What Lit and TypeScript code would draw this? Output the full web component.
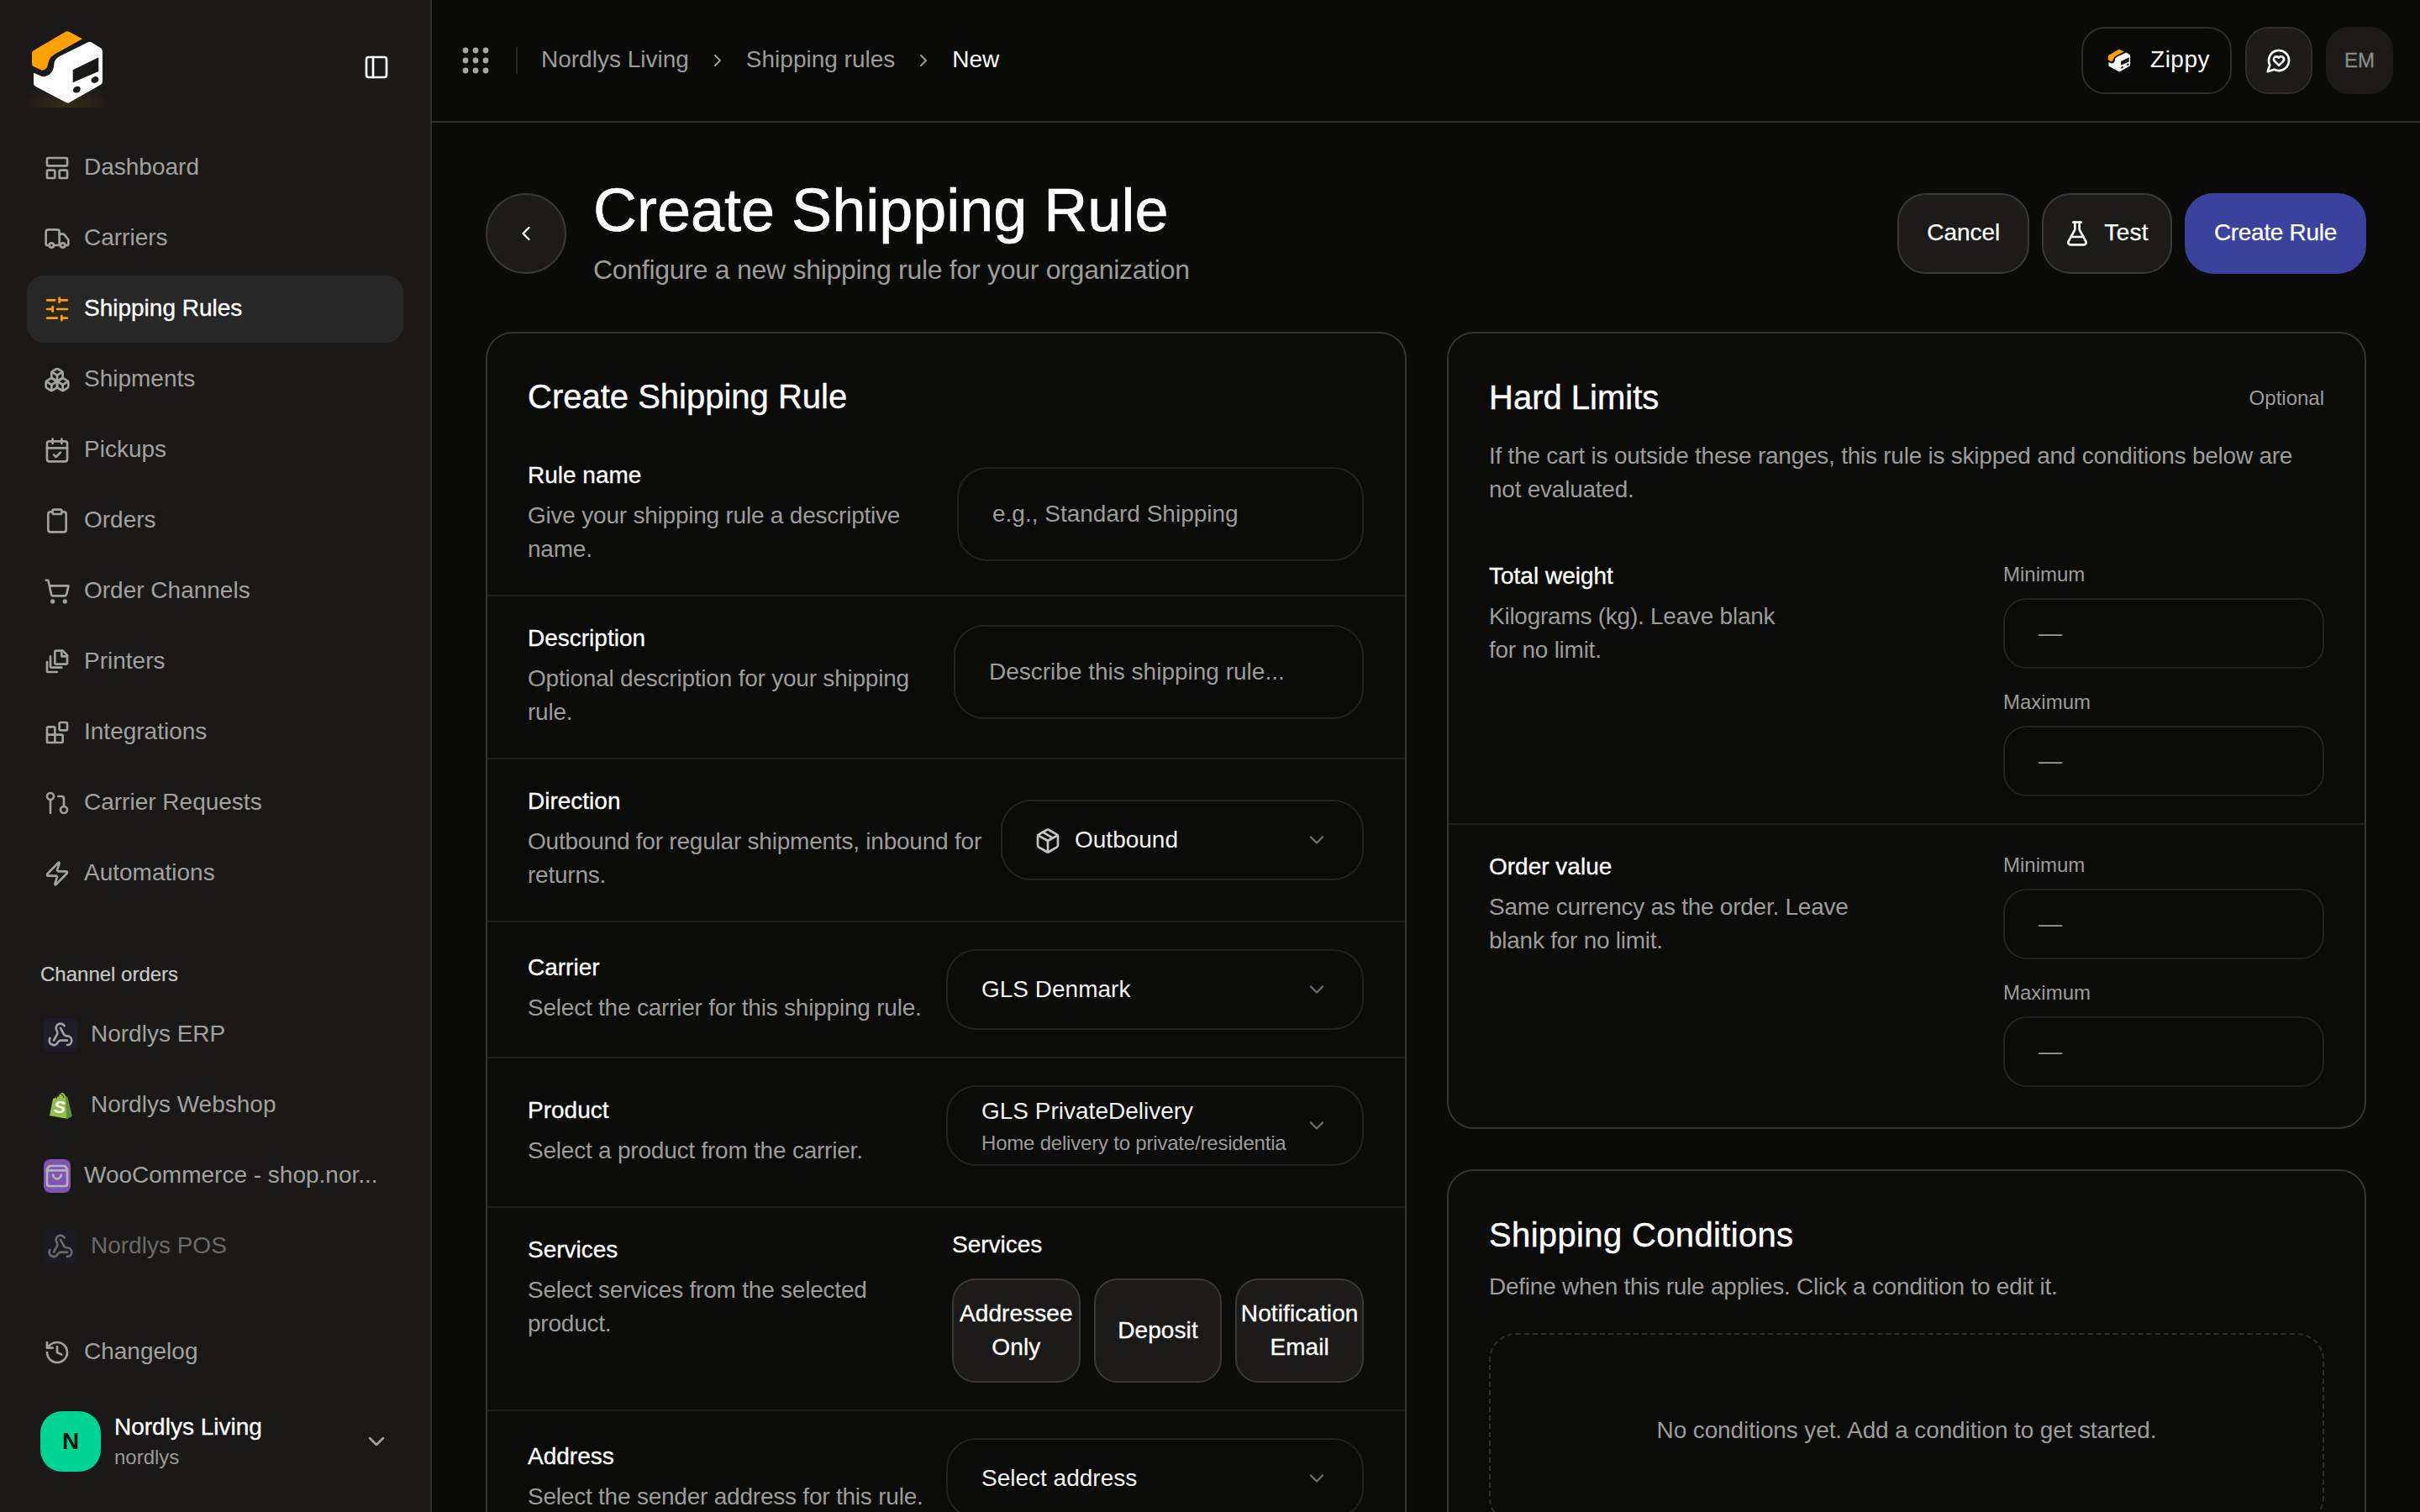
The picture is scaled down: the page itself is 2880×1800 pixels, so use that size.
import { LitElement, html, css, svg } from "lit";
import { customElement } from "lit/decorators.js";

const ic = (body: unknown, cls = "ic") => html`<svg class=${cls} viewBox="0 0 24 24" fill="none" stroke="currentColor" stroke-width="2" stroke-linecap="round" stroke-linejoin="round">${body}</svg>`;

const I: Record<string, unknown> = {
  dash: svg`<rect x="3" y="3" width="18" height="7" rx="1"/><rect x="3" y="14" width="7" height="7" rx="1"/><rect x="14" y="14" width="7" height="7" rx="1"/>`,
  truck: svg`<path d="M14 18V6a2 2 0 0 0-2-2H4a2 2 0 0 0-2 2v11a1 1 0 0 0 1 1h2"/><path d="M15 18H9"/><path d="M19 18h2a1 1 0 0 0 1-1v-3.65a1 1 0 0 0-.22-.624l-3.48-4.35A1 1 0 0 0 17.52 8H14"/><circle cx="17" cy="18" r="2"/><circle cx="7" cy="18" r="2"/>`,
  sliders: svg`<path d="M21 4h-7M10 4H3M21 12h-9M8 12H3M21 20h-5M12 20H3M14 2v4M8 10v4M16 18v4"/>`,
  boxes: svg`<path d="M2.97 12.92A2 2 0 0 0 2 14.63v3.24a2 2 0 0 0 .97 1.71l3 1.8a2 2 0 0 0 2.06 0L12 19v-5.5l-5-3-4.03 2.42Z"/><path d="m7 16.5-4.74-2.85"/><path d="m7 16.5 5-3"/><path d="M7 16.5v5.17"/><path d="M12 13.5V19l3.97 2.38a2 2 0 0 0 2.06 0l3-1.8a2 2 0 0 0 .97-1.71v-3.24a2 2 0 0 0-.97-1.71L17 10.5l-5 3Z"/><path d="m17 16.5-5-3"/><path d="m17 16.5 4.74-2.85"/><path d="M17 16.5v5.17"/><path d="M7.97 4.42A2 2 0 0 0 7 6.13v4.37l5 3 5-3V6.13a2 2 0 0 0-.97-1.71l-3-1.8a2 2 0 0 0-2.06 0l-3 1.8Z"/><path d="M12 8 7.26 5.15"/><path d="m12 8 4.74-2.85"/><path d="M12 13.5V8"/>`,
  cal: svg`<path d="M8 2v4"/><path d="M16 2v4"/><rect x="3" y="4" width="18" height="18" rx="2"/><path d="M3 10h18"/><path d="m9 16 2 2 4-4"/>`,
  clip: svg`<rect x="8" y="2" width="8" height="4" rx="1"/><path d="M16 4h2a2 2 0 0 1 2 2v14a2 2 0 0 1-2 2H6a2 2 0 0 1-2-2V6a2 2 0 0 1 2-2h2"/>`,
  cart: svg`<circle cx="8" cy="21" r="1"/><circle cx="19" cy="21" r="1"/><path d="M2.05 2.05h2l2.66 12.42a2 2 0 0 0 2 1.58h9.78a2 2 0 0 0 1.95-1.57l1.65-7.43H5.12"/>`,
  files: svg`<path d="M11 2h6l4 4v7a1 1 0 0 1-1 1h-9a1 1 0 0 1-1-1V3a1 1 0 0 1 1-1z"/><path d="M16 2v5h5"/><path d="M6 7v9a1 1 0 0 0 1 1h9"/><path d="M3 12v8a1 1 0 0 0 1 1h8"/>`,
  blocks: svg`<rect x="14" y="3" width="7" height="7" rx="1"/><path d="M10 21V8a1 1 0 0 0-1-1H4a1 1 0 0 0-1 1v12a1 1 0 0 0 1 1h12a1 1 0 0 0 1-1v-5a1 1 0 0 0-1-1H3"/>`,
  pr: svg`<circle cx="18" cy="18" r="3"/><circle cx="6" cy="6" r="3"/><path d="M13 6h3a2 2 0 0 1 2 2v7"/><path d="M6 9v12"/>`,
  zap: svg`<path d="M4 14a1 1 0 0 1-.78-1.63l9.9-10.2a.5.5 0 0 1 .86.46l-1.92 6.02A1 1 0 0 0 13 10h7a1 1 0 0 1 .78 1.63l-9.9 10.2a.5.5 0 0 1-.86-.46l1.92-6.02A1 1 0 0 0 11 14z"/>`,
  history: svg`<path d="M3 12a9 9 0 1 0 9-9 9.75 9.75 0 0 0-6.74 2.74L3 8"/><path d="M3 3v5h5"/><path d="M12 7v5l4 2"/>`,
  webhook: svg`<path d="M18 16.98h-5.99c-1.1 0-1.95.94-2.48 1.9A4 4 0 0 1 2 17c.01-.7.2-1.4.57-2"/><path d="m6 17 3.13-5.78c.53-.97.1-2.18-.5-3.1a4 4 0 1 1 6.89-4.06"/><path d="m12 6 3.13 5.73C15.66 12.7 16.9 13 18 13a4 4 0 0 1 0 8"/>`,
  down: svg`<path d="m6 9 6 6 6-6"/>`,
  right: svg`<path d="m9 18 6-6-6-6"/>`,
  left: svg`<path d="m15 18-6-6 6-6"/>`,
  panel: svg`<rect x="3" y="3" width="18" height="18" rx="2"/><path d="M9 3v18"/>`,
  flask: svg`<path d="M14 2v6a2 2 0 0 0 .245.96l5.51 10.08A2 2 0 0 1 18 22H6a2 2 0 0 1-1.755-2.96l5.51-10.08A2 2 0 0 0 10 8V2"/><path d="M6.453 15h11.094"/><path d="M8.5 2h7"/>`,
  heart: svg`<path d="M7.9 20A9 9 0 1 0 4 16.1L2 22Z"/><path d="M15.8 9.2a2.5 2.5 0 0 0-3.5 0l-.3.4-.35-.3a2.42 2.42 0 1 0-3.2 3.6l3.6 3.5 3.6-3.5c1.2-1.2 1.1-2.7.2-3.7"/>`,
  pkg: svg`<path d="M11 21.73a2 2 0 0 0 2 0l7-4A2 2 0 0 0 21 16V8a2 2 0 0 0-1-1.73l-7-4a2 2 0 0 0-2 0l-7 4A2 2 0 0 0 3 8v8a2 2 0 0 0 1 1.73z"/><path d="M12 22V12"/><polyline points="3.29 7 12 12 20.71 7"/><path d="m7.5 4.27 9 5.15"/>`,
  bag: svg`<path d="M6 3h12a2 2 0 0 1 1.6.8l1.4 2.2V19a2 2 0 0 1-2 2H5a2 2 0 0 1-2-2V6l1.4-2.2A2 2 0 0 1 6 3z"/><path d="M3 7h18"/><path d="M8.5 11a3.5 3.5 0 0 0 7 0"/>`,
};

const logo = (cls: string) => html`<svg class=${cls} viewBox="6 6 288 288">
  <path fill="#ffa100" d="M27 92 L143 24 Q150 20 158 24 L204 49 L120 95 Q86 110 82 135 Q80 160 60 161 L30 148 Q24 145 24 138 L24 100 Q24 95 27 92Z"/>
  <path fill="#fff" d="M30 170 L62 184 Q100 180 103 140 Q104 120 124 110 L226 60 Q231 58 236 61 L270 82 Q276 86 276 92 L276 202 Q276 208 270 212 L158 276 Q152 279 146 276 L36 218 Q30 215 30 208Z"/>
  <path fill="#1a1918" d="M170 160 L262 115 L262 165 L170 205Z"/>
  <ellipse fill="#1a1918" cx="184" cy="230" rx="14" ry="11" transform="rotate(-28 184 230)"/>
  <ellipse fill="#1a1918" cx="249" cy="195" rx="14" ry="11" transform="rotate(-28 249 195)"/>
</svg>`;

const shopify = html`<svg class="shop" viewBox="0 0 28 32">
  <path fill="#95bf47" d="M1 28 L5 8 Q10 6 12 5 Q14 0 17 1 Q19 2 20 5 L21.5 6 L23 32 L0 28Z"/>
  <path fill="#5e8e3e" d="M20 5 L22.5 6.5 L28 29 L21 32Z"/>
  <path fill="none" stroke="#2c4a12" stroke-width="1" d="M9 8 Q10 2 14 2 Q17 2 18 7"/>
  <text x="6" y="25" class="shop-s">S</text>
</svg>`;

const navItems: [string, string, boolean?][] = [
  ["dash", "Dashboard"], ["truck", "Carriers"], ["sliders", "Shipping Rules", true], ["boxes", "Shipments"],
  ["cal", "Pickups"], ["clip", "Orders"], ["cart", "Order Channels"], ["files", "Printers"],
  ["blocks", "Integrations"], ["pr", "Carrier Requests"], ["zap", "Automations"],
];

@customElement("app-sidebar")
class AppSidebar extends LitElement {
  static styles = css`
    :host { display: flex; flex-direction: column; width: 512px; height: 1800px; flex: none; box-sizing: content-box;
      background: #1a1918; border-right: 2px solid #2f2e2d; font-family: "Liberation Sans", sans-serif; }
    .head { display: flex; align-items: center; justify-content: space-between; padding: 32px 48px 0 32px; height: 96px; }
    .logo { width: 96px; height: 96px; background: radial-gradient(ellipse 60% 35% at 50% 100%, rgba(255,161,0,.13), transparent); }
    .toggle { width: 32px; height: 32px; color: #fff; }
    nav { display: flex; flex-direction: column; gap: 4px; padding: 32px 32px 0; }
    .row { display: flex; align-items: center; gap: 16px; height: 80px; padding: 0 20px; border-radius: 20px; color: #a1a1a0; font-size: 28px; white-space: nowrap; }
    .row > span:last-child { padding-bottom: 2px; }
    .row.on { background: #272727; color: #fff; -webkit-text-stroke: .35px #fff; }
    .row.on .ic { color: #ffa100; -webkit-text-stroke: 0; }
    .ic { width: 32px; height: 32px; flex: none; }
    .label { font-size: 24px; line-height: 32px; color: #c9c9c8; padding: 64px 48px 16px; -webkit-text-stroke: .2px #c9c9c8; }
    .chan { display: flex; flex-direction: column; gap: 4px; padding: 0 32px; }
    .box { width: 40px; height: 40px; flex: none; display: flex; align-items: center; justify-content: center; border-radius: 8px; }
    .box .ic { width: 32px; height: 32px; }
    .hook { background: #1e1c28; color: #a1a1a0; }
    .woo { width: 32px; background: #7f54b3; border-radius: 8px; color: #b5b3b8; }
    .shop { width: 28px; height: 32px; }
    .shop-s { font: italic 700 21px "Liberation Sans", sans-serif; fill: #fff; }
    .dim { opacity: .6; }
    .bottom { margin-top: auto; padding: 0 32px 48px; }
    .org { display: flex; align-items: center; margin: 30px 0 0 16px; gap: 16px; }
    .av { width: 72px; height: 72px; border-radius: 26px; background: #00d492; color: #06150f; display: flex; align-items: center; justify-content: center; font-size: 28px; font-weight: 700; flex: none; }
    .names { flex: 1; display: flex; flex-direction: column; }
    .nm { font-size: 28px; line-height: 38px; color: #fff; -webkit-text-stroke: .3px #fff; }
    .sub { font-size: 24px; line-height: 34px; color: #9a9a99; }
    .chev { width: 32px; height: 32px; color: #a1a1a0; margin-right: 16px; }
  `;
  render() {
    return html`
      <div class="head">${logo("logo")}${ic(I.panel, "toggle")}</div>
      <nav>${navItems.map(([i, t, on]) => html`<div class="row ${on ? "on" : ""}">${ic(I[i])}<span>${t}</span></div>`)}</nav>
      <div class="label">Channel orders</div>
      <div class="chan">
        <div class="row"><span class="box hook">${ic(I.webhook)}</span><span>Nordlys ERP</span></div>
        <div class="row"><span class="box">${shopify}</span><span>Nordlys Webshop</span></div>
        <div class="row"><span class="box woo">${ic(I.bag)}</span><span>WooCommerce - shop.nor...</span></div>
        <div class="row dim"><span class="box hook">${ic(I.webhook)}</span><span>Nordlys POS</span></div>
      </div>
      <div class="bottom">
        <div class="row">${ic(I.history)}<span>Changelog</span></div>
        <div class="org">
          <div class="av">N</div>
          <div class="names"><span class="nm">Nordlys Living</span><span class="sub">nordlys</span></div>
          ${ic(I.down, "chev")}
        </div>
      </div>
    `;
  }
}

type Row = { label: string; desc: string; width: number; kind: string; value?: string; sub?: string; cls?: string };
const rows: Row[] = [
  { label: "Rule name", desc: "Give your shipping rule a descriptive name.", width: 484, kind: "input", value: "e.g., Standard Shipping" },
  { label: "Description", desc: "Optional description for your shipping rule.", width: 488, kind: "input", value: "Describe this shipping rule...", cls: "top" },
  { label: "Direction", desc: "Outbound for regular shipments, inbound for returns.", width: 432, kind: "dir", value: "Outbound" },
  { label: "Carrier", desc: "Select the carrier for this shipping rule.", width: 497, kind: "select", value: "GLS Denmark" },
  { label: "Product", desc: "Select a product from the carrier.", width: 497, kind: "product", value: "GLS PrivateDelivery", sub: "Home delivery to private/residential addresses" },
  { label: "Services", desc: "Select services from the selected product.", width: 490, kind: "services" },
  { label: "Address", desc: "Select the sender address for this rule.", width: 497, kind: "select", value: "Select address" },
];

@customElement("app-form-card")
class AppFormCard extends LitElement {
  static styles = css`
    :host { display: block; box-sizing: border-box; border: 2px solid #333332; border-bottom: none; border-radius: 32px 32px 0 0; background: #0b0b0a; font-family: "Liberation Sans", sans-serif; }
    h2 { margin: 0; padding: 47px 48px 16px; font-size: 40px; line-height: 56px; font-weight: 400; color: #fff; -webkit-text-stroke: .4px #fff; }
    .r { display: flex; align-items: center; gap: 16px; padding: 32px 49px 32px 48px; border-bottom: 2px solid #1f1f1e; }
    .r.product { min-height: 112px; }
    .r.services { align-items: flex-start; padding-top: 28px; }
    .r.services .t { padding-top: 4px; }
    .r:last-child { border-bottom: none; }
    .t { flex: 1; min-width: 0; margin-top: -2px; margin-bottom: 2px; }
    .l { font-size: 28px; line-height: 40px; color: #fff; margin-bottom: 8px; -webkit-text-stroke: .3px #fff; }
    .d { font-size: 28px; line-height: 40px; color: #9c9c9a; letter-spacing: -.22px; }
    .c { flex: none; box-sizing: border-box; }
    .c.top { align-self: flex-start; margin-top: 2px; }
    .field { box-sizing: border-box; display: flex; align-items: center; height: 112px; padding: 0 40px; border: 2px solid #232322; border-radius: 36px; font-size: 28px; color: #9c9c9a; }
    .sel { box-sizing: border-box; display: flex; align-items: center; height: 96px; padding: 0 40px; border: 2px solid #232322; border-radius: 36px; font-size: 28px; color: #f2f2f2; gap: 16px; }
    .sel .v { flex: 1; min-width: 0; }
    .dirsel { padding-left: 38px; }
    .sel .pk { width: 32px; height: 32px; flex: none; color: #c5c5c4; margin-top: 2px; }
    .sel .cv { width: 28px; height: 28px; flex: none; color: #6e6e6c; }
    .two { line-height: 40px; overflow: hidden; white-space: nowrap; margin-right: 6px; }
    .two small { display: block; font-size: 24px; line-height: 32px; color: #9c9c9a; overflow: hidden; margin-top: 2px; letter-spacing: -.2px; }
    .prod { align-self: flex-start; margin-top: 0; }
    .svc-l { font-size: 28px; line-height: 32px; color: #fff; margin-bottom: 24px; -webkit-text-stroke: .3px #fff; padding-top: 0; }
    .svc { display: flex; gap: 16px; }
    .chip { box-sizing: border-box; height: 124px; display: flex; align-items: center; justify-content: center; text-align: center; flex: 1; border: 2px solid #3a3938; border-radius: 28px; background: #1c1b1a; font-size: 28px; line-height: 40px; color: #fff; -webkit-text-stroke: .3px #fff; letter-spacing: .1px; }
  `;
  control(r: Row) {
    const cv = ic(I.down, "cv");
    if (r.kind === "input") return html`<div class="field">${r.value}</div>`;
    if (r.kind === "dir") return html`<div class="sel dirsel">${ic(I.pkg, "pk")}<span class="v">${r.value}</span>${cv}</div>`;
    if (r.kind === "select") return html`<div class="sel"><span class="v">${r.value}</span>${cv}</div>`;
    if (r.kind === "product") return html`<div class="sel"><span class="v two">${r.value}<small>${r.sub}</small></span>${cv}</div>`;
    return html`<div class="svc-l">Services</div><div class="svc"><div class="chip">Addressee<br />Only</div><div class="chip">Deposit</div><div class="chip">Notification<br />Email</div></div>`;
  }
  render() {
    return html`
      <h2>Create Shipping Rule</h2>
      ${rows.map((r) => html`<div class="r ${r.kind}">
        <div class="t"><div class="l">${r.label}</div><div class="d">${r.desc}</div></div>
        <div class="c ${r.kind === "product" ? "prod" : ""} ${r.cls ?? ""}" style="width:${r.width}px">${this.control(r)}</div>
      </div>`)}
    `;
  }
}

@customElement("app-side-cards")
class AppSideCards extends LitElement {
  static styles = css`
    :host { display: flex; flex-direction: column; gap: 48px; font-family: "Liberation Sans", sans-serif; }
    .card { border: 2px solid #333332; border-radius: 32px; background: #0b0b0a; box-sizing: border-box; }
    .top { padding: 48px 48px 32px; }
    .hd { display: flex; justify-content: space-between; align-items: center; }
    h2 { margin: 0; font-size: 40px; line-height: 56px; font-weight: 400; color: #fff; -webkit-text-stroke: .4px #fff; }
    .opt { font-size: 24px; color: #9c9c9a; padding-top: 2px; }
    p { margin: 22px 0 0; font-size: 28px; line-height: 40px; color: #9c9c9a; letter-spacing: -.24px; }
    .sec { display: flex; justify-content: space-between; padding: 32px 48px; border-bottom: 2px solid #1f1f1e; }
    .sec.first { margin-top: 1px; }
    .sec.last { border-bottom: none; padding-bottom: 48px; }
    .tl { font-size: 28px; line-height: 40px; color: #fff; margin: -2px 0 8px; -webkit-text-stroke: .3px #fff; }
    .dl { font-size: 28px; line-height: 40px; color: #9c9c9a; letter-spacing: -.25px; }
    .inputs { width: 382px; flex: none; display: flex; flex-direction: column; }
    .mini { font-size: 24px; line-height: 32px; color: #9c9c9a; margin-bottom: 12px; }
    .inp { box-sizing: border-box; height: 84px; border: 2px solid #232322; border-radius: 28px; padding: 0 40px; display: flex; align-items: center; font-size: 28px; color: #9c9c9a; }
    .inp + .mini { margin-top: 24px; }
    .c2 { padding: 48px; }
    .c2 h2 { letter-spacing: .35px; }
    .c2 p { margin-top: 14px; }
    .empty { box-sizing: border-box; margin-top: 35px; height: 228px; padding-top: 4px; border: 2px dashed #2f2f2e; border-radius: 32px; display: flex; align-items: center; justify-content: center; font-size: 28px; color: #9c9c9a; letter-spacing: -.12px; }
  `;
  sec(title: string, l1: string, l2: string, cls: string) {
    return html`<div class="sec ${cls}">
      <div><div class="tl">${title}</div><div class="dl">${l1}<br />${l2}</div></div>
      <div class="inputs">
        <div class="mini">Minimum</div><div class="inp">—</div>
        <div class="mini">Maximum</div><div class="inp">—</div>
      </div>
    </div>`;
  }
  render() {
    return html`
      <div class="card">
        <div class="top">
          <div class="hd"><h2>Hard Limits</h2><span class="opt">Optional</span></div>
          <p>If the cart is outside these ranges, this rule is skipped and conditions below are not evaluated.</p>
        </div>
        ${this.sec("Total weight", "Kilograms (kg). Leave blank", "for no limit.", "first")}
        ${this.sec("Order value", "Same currency as the order. Leave", "blank for no limit.", "last")}
      </div>
      <div class="card c2">
        <h2>Shipping Conditions</h2>
        <p>Define when this rule applies. Click a condition to edit it.</p>
        <div class="empty">No conditions yet. Add a condition to get started.</div>
      </div>
    `;
  }
}

@customElement("app-root")
class AppRoot extends LitElement {
  static styles = css`
    :host { display: flex; width: 2880px; height: 1800px; overflow: hidden; background: #0a0a09; font-family: "Liberation Sans", sans-serif; color: #fff; }
    main { flex: 1; min-width: 0; display: flex; flex-direction: column; height: 1800px; overflow: hidden; }
    header { flex: none; height: 144px; border-bottom: 2px solid #2f2e2d; display: flex; align-items: center; padding: 0 32px 0 36px; gap: 0; }
    .grip { width: 32px; height: 32px; flex: none; fill: #a8a8a6; }
    .sep { width: 2px; height: 32px; background: #2a2a29; margin: 0 28px 0 32px; }
    .crumb { font-size: 28px; color: #9c9c9a; padding-bottom: 2px; }
    .crumb.now { color: #fff; }
    .cs { width: 24px; height: 24px; color: #9c9c9a; margin: 0 22px; flex: none; }
    .sp { flex: 1; }
    .tb { height: 80px; box-sizing: border-box; border-radius: 28px; border: 2px solid #2f2e2d; display: flex; align-items: center; justify-content: center; font-size: 28px; color: #fff; }
    .zippy { padding: 0 24px 0 28px; gap: 22px; background: #0a0a09; margin-right: 16px; letter-spacing: .5px; }
    .zippy span { padding-bottom: 2px; }
    .zl { width: 30px; height: 30px; }
    .hb { width: 80px; background: #1c1b1a; margin-right: 16px; }
    .hb .ic { width: 32px; height: 32px; }
    .em { width: 80px; background: #1c1b1a; border-color: #1c1b1a; color: #8c8c8a; font-size: 24px; -webkit-text-stroke: .3px #8c8c8a; }
    .content { padding: 0 64px; flex: 1; min-height: 0; }
    .ph { display: flex; align-items: center; padding-top: 64px; margin-bottom: 49px; }
    .back { width: 96px; height: 96px; box-sizing: border-box; border-radius: 50%; border: 2px solid #3a3938; background: #1c1b1a; display: flex; align-items: center; justify-content: center; flex: none; margin-right: 32px; color: #fff; }
    .back svg { width: 28px; height: 28px; }
    h1 { margin: 0; font-size: 72px; line-height: 80px; font-weight: 400; color: #fff; -webkit-text-stroke: .6px #fff; }
    .subt { font-size: 32px; line-height: 40px; color: #9c9c9a; margin: 11px 0 5px; letter-spacing: -.28px; }
    .acts { display: flex; gap: 17px; }
    .b { height: 96px; box-sizing: border-box; border-radius: 34px; border: 2px solid #3a3938; background: #1c1b1a; display: flex; align-items: center; justify-content: center; padding: 0 33px 2px; font-size: 28px; color: #fff; -webkit-text-stroke: .25px #fff; }
    .b.c { margin-right: -2px; }
    .b .ic { width: 32px; height: 32px; -webkit-text-stroke: 0; margin-top: 2px; }
    .b.t { padding: 0 26px 2px 24px; gap: 16px; letter-spacing: .3px; }
    .b.p { background: #3b429d; border-color: #3b429d; letter-spacing: -.3px; margin-left: -2px; }
    .grid { display: grid; grid-template-columns: 1096px 1094px; gap: 48px; align-items: start; }
  `;
  render() {
    const cs = ic(I.right, "cs");
    return html`
      <app-sidebar></app-sidebar>
      <main>
        <header>
          <svg class="grip" viewBox="0 0 32 32">${[4, 16, 28].flatMap((y) => [4, 16, 28].map((x) => svg`<circle cx=${x} cy=${y} r="3.4"/>`))}</svg>
          <span class="sep"></span>
          <span class="crumb">Nordlys Living</span>${cs}
          <span class="crumb">Shipping rules</span>${cs}
          <span class="crumb now">New</span>
          <span class="sp"></span>
          <div class="tb zippy">${logo("zl")}<span>Zippy</span></div>
          <div class="tb hb">${ic(I.heart)}</div>
          <div class="tb em">EM</div>
        </header>
        <div class="content">
          <div class="ph">
            <div class="back">${ic(I.left, "")}</div>
            <div><h1>Create Shipping Rule</h1><div class="subt">Configure a new shipping rule for your organization</div></div>
            <span class="sp"></span>
            <div class="acts">
              <div class="b c">Cancel</div>
              <div class="b t">${ic(I.flask)}<span>Test</span></div>
              <div class="b p">Create Rule</div>
            </div>
          </div>
          <div class="grid">
            <app-form-card></app-form-card>
            <app-side-cards></app-side-cards>
          </div>
        </div>
      </main>
    `;
  }
}
